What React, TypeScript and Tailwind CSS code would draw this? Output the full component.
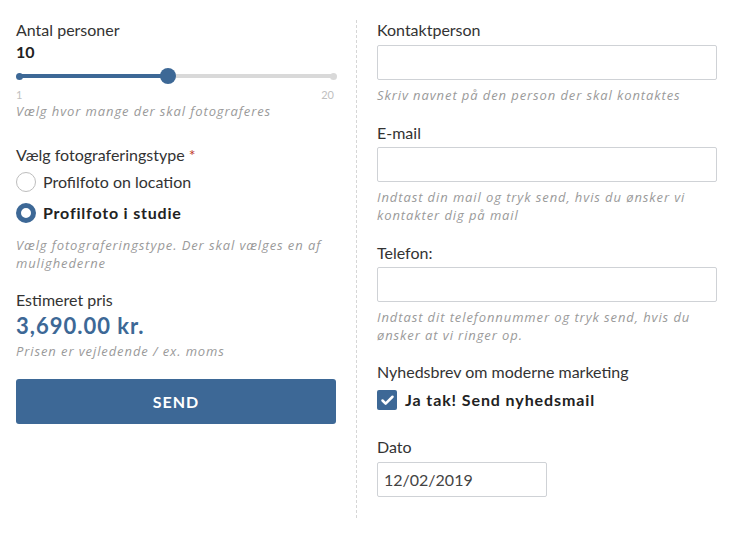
import { Check } from "lucide-react";

const font = { fontFamily: "Lato, 'Open Sans', sans-serif" };

function Help({ children, className = "" }: { children: React.ReactNode; className?: string }) {
  return (
    <p
      className={`text-[13px] italic leading-[18px] tracking-[0.9px] text-[#9a9a9a] ${className}`}
      style={{ fontFamily: "'Open Sans', Lato, sans-serif" }}
    >
      {children}
    </p>
  );
}

function Label({ children, className = "" }: { children: React.ReactNode; className?: string }) {
  return <p className={`text-[16px] leading-[22px] text-[#333] ${className}`}>{children}</p>;
}

function Input({ className = "", value }: { className?: string; value?: string }) {
  return (
    <input
      readOnly
      value={value ?? ""}
      className={`h-[35px] rounded-[2px] border border-[#cfd2d6] bg-white px-[6px] text-[16px] text-[#444] outline-none ${className}`}
    />
  );
}

function Slider({ min, max, value }: { min: number; max: number; value: number }) {
  const pct = ((value - min) / (max - min)) * 100;
  return (
    <div className="relative mx-[3px] h-4">
      <div className="absolute left-0 right-0 top-[6px] h-[4px] rounded-full bg-[#d9d9d9]" />
      <div className="absolute left-0 top-[6px] h-[4px] rounded-full bg-[#3d6896]" style={{ width: `${pct}%` }} />
      <div className="absolute left-[-3.5px] top-[4.5px] size-[7px] rounded-full bg-[#3d6896]" />
      <div className="absolute right-[-3.5px] top-[4.5px] size-[7px] rounded-full bg-[#d9d9d9]" />
      <div
        className="absolute top-0 size-4 -translate-x-1/2 rounded-full bg-[#3d6896]"
        style={{ left: `${pct}%` }}
      />
    </div>
  );
}

function Radio({ checked, label }: { checked?: boolean; label: string }) {
  return (
    <div className="flex h-6 items-center gap-[7px]">
      <span
        className={`size-5 rounded-full ${checked ? "border-[5px] border-[#3d6896]" : "border border-[#bdbdbd]"} bg-white`}
      />
      <span className={`text-[16px] ${checked ? "font-bold tracking-[0.8px] text-[#222]" : "text-[#333]"}`}>{label}</span>
    </div>
  );
}

export default function App() {
  return (
    <div className="flex min-h-[536px] bg-white px-4 pt-[19px]" style={font}>
      <div className="w-[320px] shrink-0">
        <Label>Antal personer</Label>
        <p className="text-[16px] font-bold leading-[22px] text-[#222]">10</p>
        <div className="mt-[5px]">
          <Slider min={1} max={20} value={10} />
        </div>
        <div className="mt-[4px] flex justify-between text-[11px] leading-[14px] text-[#c0c0c0]">
          <span>1</span>
          <span className="mr-[2px]">20</span>
        </div>
        <Help>Vælg hvor mange der skal fotograferes</Help>

        <Label className="mt-[24px]">
          Vælg fotograferingstype <span className="text-[#c0392b]">*</span>
        </Label>
        <div className="mt-[4px]">
          <Radio label="Profilfoto on location" />
        </div>
        <div className="mt-[7px]">
          <Radio checked label="Profilfoto i studie" />
        </div>
        <Help className="mt-[11px]">Vælg fotograferingstype. Der skal vælges en af mulighederne</Help>

        <Label className="mt-[17px]">Estimeret pris</Label>
        <p className="mt-[2px] text-[22px] font-bold leading-[26px] tracking-[1px] text-[#3d6896]">3,690.00 kr.</p>
        <Help className="mt-[3px]">Prisen er vejledende / ex. moms</Help>

        <button
          type="button"
          className="mt-[19px] h-[45px] w-full rounded-[3px] bg-[#3d6896] text-[16px] font-bold tracking-[1px] text-white"
        >
          SEND
        </button>
      </div>

      <div className="mx-5 mt-px mb-[18px] w-0 border-l border-dashed border-[#d6d6d6]" />

      <div className="flex w-[340px] shrink-0 flex-col pb-[21px]">
        <Label>Kontaktperson</Label>
        <Input className="mt-[4px] w-full" />
        <Help className="mt-[6px]">Skriv navnet på den person der skal kontaktes</Help>

        <Label className="mt-[18px]">E-mail</Label>
        <Input className="mt-[3px] w-full" />
        <Help className="mt-[6px]">Indtast din mail og tryk send, hvis du ønsker vi kontakter dig på mail</Help>

        <Label className="mt-[18px]">Telefon:</Label>
        <Input className="mt-[3px] w-full" />
        <Help className="mt-[6px]">Indtast dit telefonnummer og tryk send, hvis du ønsker at vi ringer op.</Help>

        <Label className="mt-[17px]">Nyhedsbrev om moderne marketing</Label>
        <div className="mt-[7px] flex h-5 items-center gap-[8px]">
          <span className="flex size-5 items-center justify-center rounded-[2px] bg-[#3d6896]">
            <Check className="size-[15px] text-white" strokeWidth={4} />
          </span>
          <span className="text-[16px] font-bold tracking-[0.9px] text-[#222]">Ja tak! Send nyhedsmail</span>
        </div>

        <Label className="mt-[26px]">Dato</Label>
        <Input className="mt-[4px] w-[170px]" value="12/02/2019" />
      </div>
    </div>
  );
}
